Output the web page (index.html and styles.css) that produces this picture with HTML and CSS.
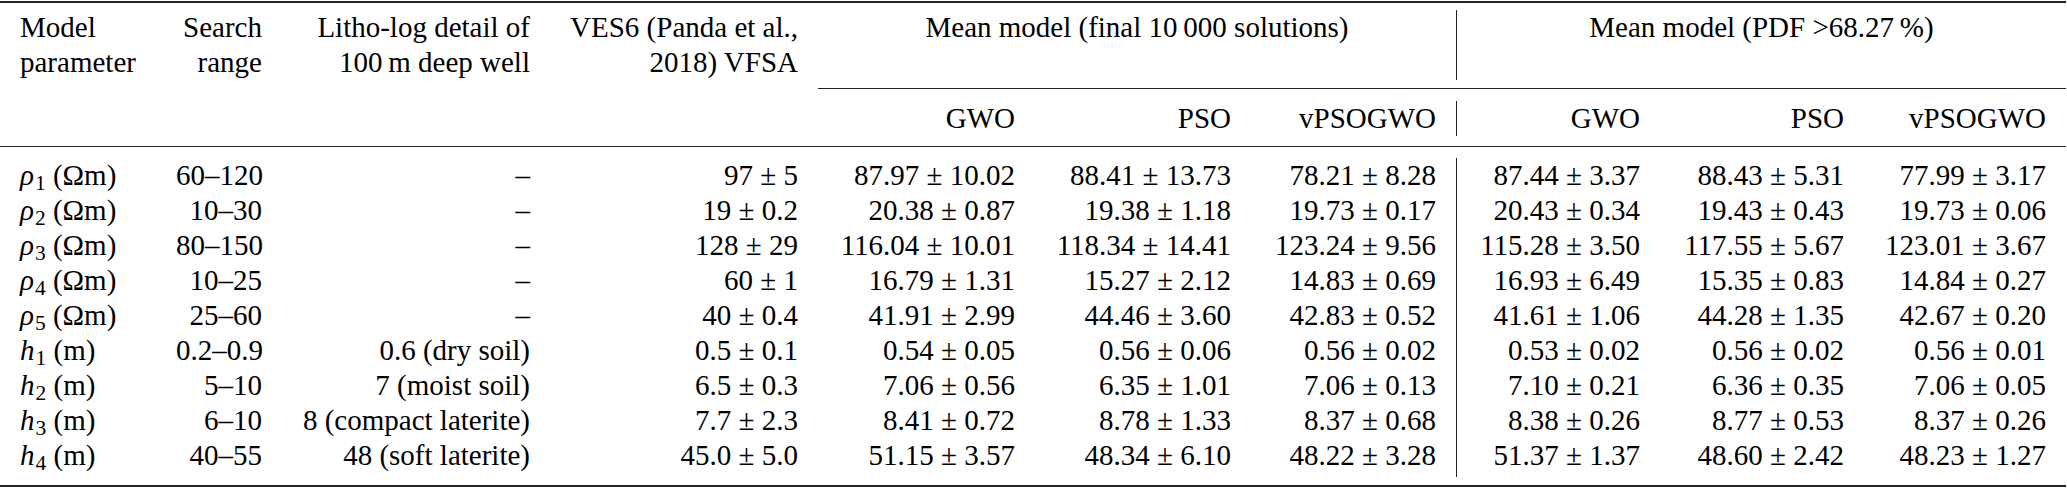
FILE: index.html
```html
<!DOCTYPE html>
<html lang="en">
<head>
<meta charset="utf-8">
<title>Table</title>
<link rel="stylesheet" href="styles.css">
</head>
<body>
<table class="tbl">
  <colgroup>
    <col class="w-param"><col class="w-range"><col class="w-litho"><col class="w-ves">
    <col class="w-gwo1"><col class="w-pso1"><col class="w-vp1">
    <col class="w-gwo2"><col class="w-pso2"><col class="w-vp2">
  </colgroup>
  <tbody>
    <tr class="rule r-top"><td colspan="10"><div class="line thick"></div></td></tr>
    <tr class="head">
      <th class="l">Model<br>parameter</th>
      <th>Search<br>range</th>
      <th>Litho-log detail of<br>100&thinsp;m deep well</th>
      <th>VES6 (Panda et al.,<br>2018) VFSA</th>
      <th class="c" colspan="3">Mean model (final 10&thinsp;000 solutions)</th>
      <th class="c sep" colspan="3">Mean model (PDF &gt;68.27&thinsp;%)</th>
    </tr>
    <tr class="rule r-cmid"><td colspan="4"></td><td colspan="6"><div class="line thin"></div></td></tr>
    <tr class="head">
      <th></th><th></th><th></th><th></th>
      <th>GWO</th><th>PSO</th><th>vPSOGWO</th>
      <th class="sep">GWO</th><th>PSO</th><th>vPSOGWO</th>
    </tr>
    <tr class="rule r-mid"><td colspan="10"><div class="line thin"></div></td></tr>
    <tr>
      <td class="l"><i>ρ</i><sub>1</sub> (Ωm)</td><td>60–120</td><td>–</td><td>97 ± 5</td>
      <td>87.97 ± 10.02</td><td>88.41 ± 13.73</td><td>78.21 ± 8.28</td>
      <td class="sep">87.44 ± 3.37</td><td>88.43 ± 5.31</td><td>77.99 ± 3.17</td>
    </tr>
    <tr>
      <td class="l"><i>ρ</i><sub>2</sub> (Ωm)</td><td>10–30</td><td>–</td><td>19 ± 0.2</td>
      <td>20.38 ± 0.87</td><td>19.38 ± 1.18</td><td>19.73 ± 0.17</td>
      <td class="sep">20.43 ± 0.34</td><td>19.43 ± 0.43</td><td>19.73 ± 0.06</td>
    </tr>
    <tr>
      <td class="l"><i>ρ</i><sub>3</sub> (Ωm)</td><td>80–150</td><td>–</td><td>128 ± 29</td>
      <td>116.04 ± 10.01</td><td>118.34 ± 14.41</td><td>123.24 ± 9.56</td>
      <td class="sep">115.28 ± 3.50</td><td>117.55 ± 5.67</td><td>123.01 ± 3.67</td>
    </tr>
    <tr>
      <td class="l"><i>ρ</i><sub>4</sub> (Ωm)</td><td>10–25</td><td>–</td><td>60 ± 1</td>
      <td>16.79 ± 1.31</td><td>15.27 ± 2.12</td><td>14.83 ± 0.69</td>
      <td class="sep">16.93 ± 6.49</td><td>15.35 ± 0.83</td><td>14.84 ± 0.27</td>
    </tr>
    <tr>
      <td class="l"><i>ρ</i><sub>5</sub> (Ωm)</td><td>25–60</td><td>–</td><td>40 ± 0.4</td>
      <td>41.91 ± 2.99</td><td>44.46 ± 3.60</td><td>42.83 ± 0.52</td>
      <td class="sep">41.61 ± 1.06</td><td>44.28 ± 1.35</td><td>42.67 ± 0.20</td>
    </tr>
    <tr>
      <td class="l"><i>h</i><sub>1</sub> (m)</td><td>0.2–0.9</td><td>0.6 (dry soil)</td><td>0.5 ± 0.1</td>
      <td>0.54 ± 0.05</td><td>0.56 ± 0.06</td><td>0.56 ± 0.02</td>
      <td class="sep">0.53 ± 0.02</td><td>0.56 ± 0.02</td><td>0.56 ± 0.01</td>
    </tr>
    <tr>
      <td class="l"><i>h</i><sub>2</sub> (m)</td><td>5–10</td><td>7 (moist soil)</td><td>6.5 ± 0.3</td>
      <td>7.06 ± 0.56</td><td>6.35 ± 1.01</td><td>7.06 ± 0.13</td>
      <td class="sep">7.10 ± 0.21</td><td>6.36 ± 0.35</td><td>7.06 ± 0.05</td>
    </tr>
    <tr>
      <td class="l"><i>h</i><sub>3</sub> (m)</td><td>6–10</td><td>8 (compact laterite)</td><td>7.7 ± 2.3</td>
      <td>8.41 ± 0.72</td><td>8.78 ± 1.33</td><td>8.37 ± 0.68</td>
      <td class="sep">8.38 ± 0.26</td><td>8.77 ± 0.53</td><td>8.37 ± 0.26</td>
    </tr>
    <tr class="last">
      <td class="l"><i>h</i><sub>4</sub> (m)</td><td>40–55</td><td>48 (soft laterite)</td><td>45.0 ± 5.0</td>
      <td>51.15 ± 3.57</td><td>48.34 ± 6.10</td><td>48.22 ± 3.28</td>
      <td class="sep">51.37 ± 1.37</td><td>48.60 ± 2.42</td><td>48.23 ± 1.27</td>
    </tr>
    <tr class="rule r-bot"><td colspan="10"><div class="line thick"></div></td></tr>
  </tbody>
</table>
</body>
</html>
```
FILE: styles.css
```css
html, body {
  margin: 0;
  padding: 0;
  background: #ffffff;
  font-family: "Liberation Serif", "Times New Roman", serif;
}

.tbl {
  border-collapse: separate;
  border-spacing: 0;
  table-layout: fixed;
  width: 2066px;
  font-size: 29px;
  line-height: 35px;
  color: #000000;
}

.w-param { width: 156px; }
.w-range { width: 126px; }
.w-litho { width: 268px; }
.w-ves   { width: 268px; }
.w-gwo1  { width: 217px; }
.w-pso1  { width: 216px; }
.w-vp1   { width: 205px; }
.w-gwo2  { width: 204px; }
.w-pso2  { width: 204px; }
.w-vp2   { width: 202px; }

.tbl th,
.tbl td {
  padding: 0 20px;
  font-family: "Liberation Serif", "Times New Roman", serif;
  text-align: right;
  vertical-align: top;
  font-weight: normal;
  white-space: nowrap;
}

.tbl .l { text-align: left; }
.tbl .c { text-align: center; }

.tbl .sep { border-left: 1px solid #222222; }

.tbl sub {
  font-size: 0.74em;
  line-height: 0;
  vertical-align: -0.24em;
  margin-left: 1px;
}

.tbl i { font-style: italic; }

.rule td {
  padding: 0;
  font-size: 0;
  line-height: 0;
}

.line { background: #222222; }
.line.thick { height: 2px; }
.line.thin { height: 1px; }

.r-top td { padding: 1px 0 7px; }
.r-cmid td { padding: 8px 0 12px; }
.r-mid td { padding: 10px 0 11px; }
.r-bot td { padding: 8px 0 0; }

.last td { padding-bottom: 4px; }
```
